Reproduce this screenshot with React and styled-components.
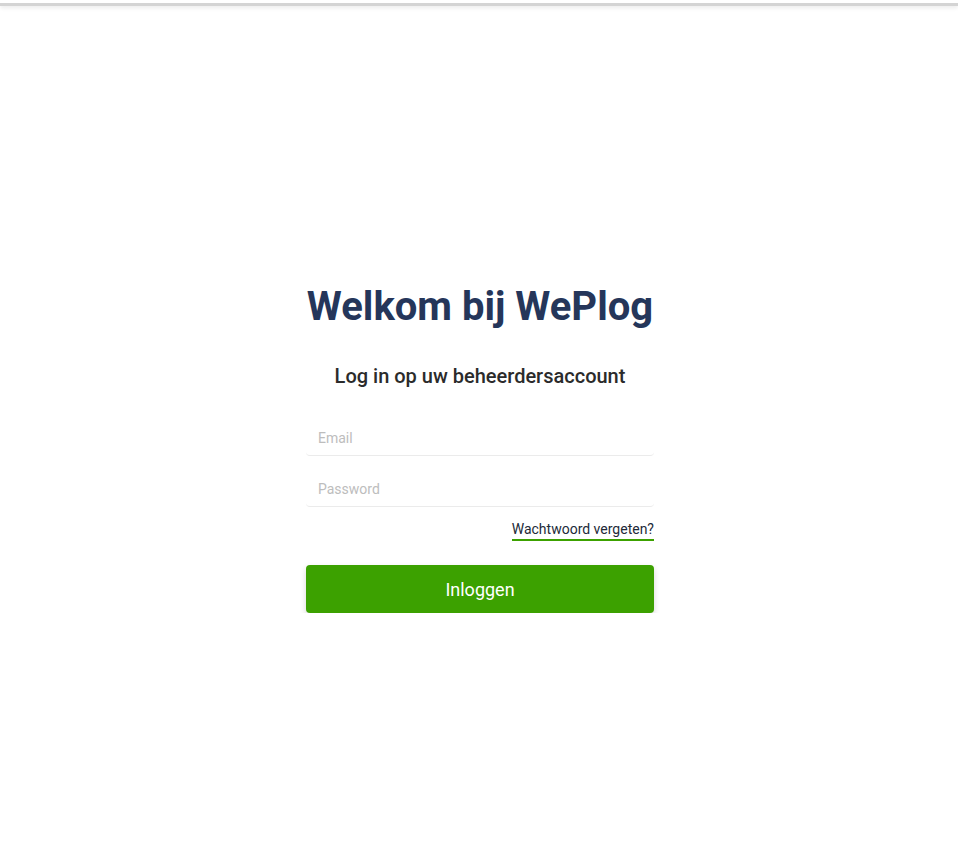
import { styled, createGlobalStyle } from "styled-components";

const GlobalStyle = createGlobalStyle`
  html, body {
    margin: 0;
    padding: 0;
    background: #fff;
    font-family: Roboto, "Liberation Sans", sans-serif;
  }
  * {
    box-sizing: border-box;
  }
`;

const TopBar = styled.header`
  height: 3px;
  border-bottom: 3px solid #d4d4d4;
  box-shadow: 0 2px 4px rgba(0, 0, 0, 0.08);
  box-sizing: content-box;
`;

const Main = styled.main`
  display: flex;
  justify-content: center;
  padding: 277px 0 0 2px;
`;

const Form = styled.form`
  width: 348px;
  display: flex;
  flex-direction: column;
`;

const Title = styled.h1`
  margin: 0;
  font-size: 40px;
  line-height: 48px;
  font-weight: 700;
  color: #25365a;
  text-align: center;
`;

const Subtitle = styled.h2`
  margin: 33px 0 0;
  font-size: 20px;
  line-height: 24px;
  font-weight: 500;
  color: #2b2b2b;
  text-align: center;
`;

const Input = styled.input`
  margin-top: ${(p) => p.$gap}px;
  height: 36px;
  width: 100%;
  border: none;
  border-bottom: 1px solid #ebebeb;
  border-radius: 4px;
  padding: 0 12px;
  font-family: inherit;
  font-size: 14px;
  color: #333;
  outline: none;
  background: transparent;

  &::placeholder {
    color: #bdbdbd;
  }
`;

const LinkRow = styled.div`
  display: flex;
  justify-content: flex-end;
  margin-top: 14px;
`;

const ForgotLink = styled.a`
  display: inline-block;
  font-size: 14px;
  line-height: 16px;
  color: #222a38;
  text-decoration: none;
  padding-bottom: 2px;
  border-bottom: 2px solid #3ca100;
  cursor: pointer;
`;

const SubmitButton = styled.button`
  margin-top: 24px;
  height: 48px;
  width: 100%;
  border: none;
  border-radius: 4px;
  background: #3ca100;
  color: #fff;
  font-family: inherit;
  font-size: 18px;
  font-weight: 400;
  box-shadow: 0 3px 6px rgba(0, 0, 0, 0.16);
  cursor: pointer;
`;

export default function App() {
  return (
    <>
      <GlobalStyle />
      <TopBar />
      <Main>
        <Form onSubmit={(e) => e.preventDefault()}>
          <Title>Welkom bij WePlog</Title>
          <Subtitle>Log in op uw beheerdersaccount</Subtitle>
          <Input type="email" placeholder="Email" $gap={32} />
          <Input type="password" placeholder="Password" $gap={15} />
          <LinkRow>
            <ForgotLink>Wachtwoord vergeten?</ForgotLink>
          </LinkRow>
          <SubmitButton type="submit">Inloggen</SubmitButton>
        </Form>
      </Main>
    </>
  );
}
